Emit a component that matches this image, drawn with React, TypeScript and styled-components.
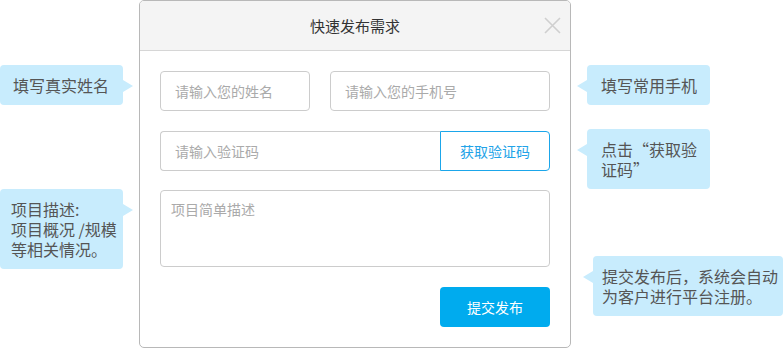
import React from "react";
import styled, { createGlobalStyle } from "styled-components";

const colors = {
    tipBg: "#c8ecfd",
    tipText: "#555555",
    border: "#cccccc",
    blue: "#00abee",
    placeholder: "#aaaaaa",
};

const GlobalStyle = createGlobalStyle`
    html, body {
        margin: 0;
        padding: 0;
        background: #ffffff;
        font-family: "Noto Sans CJK SC", "Noto Sans", sans-serif;
    }
`;

interface Tip {
    lines: string[];
    gap: number;
    indent?: number;
    width?: number;
    pad: number;
}

const leftTips: Tip[] = [
    { lines: ["填写真实姓名"], gap: 65, pad: 13 },
    { lines: ["项目描述:", "项目概况 /规模", "等相关情况。"], gap: 84, pad: 11 },
];

const rightTips: Tip[] = [
    { lines: ["填写常用手机"], gap: 65, indent: 16, pad: 14 },
    { lines: ["点击“获取验", "证码”"], gap: 24, indent: 16, pad: 14 },
    { lines: ["提交发布后，系统会自动", "为客户进行平台注册。"], gap: 67, indent: 22, width: 190, pad: 9 },
];

const App: React.FC = () => {
    return (
        <Page>
            <GlobalStyle />
            <SideColumn>
                {leftTips.map((tip, i) => (
                    <Callout key={"l" + i} $side="right" $gap={tip.gap} $indent={0} $width={123} $pad={tip.pad}>
                        {tip.lines.map((line, j) => (
                            <div key={j}>{line}</div>
                        ))}
                    </Callout>
                ))}
            </SideColumn>
            <Modal>
                <Header>
                    <Title>快速发布需求</Title>
                    <Close>
                        <svg width="17" height="17" viewBox="0 0 17 17">
                            <path d="M1 1 L16 16 M16 1 L1 16" stroke="#cfcfcf" strokeWidth="1.6" fill="none" />
                        </svg>
                    </Close>
                </Header>
                <Body>
                    <Row>
                        <Field placeholder="请输入您的姓名" $width={150} />
                        <Field placeholder="请输入您的手机号" $width={220} />
                    </Row>
                    <Row>
                        <CodeField placeholder="请输入验证码" />
                        <CodeButton>获取验证码</CodeButton>
                    </Row>
                    <Description placeholder="项目简单描述" />
                    <Footer>
                        <Submit>提交发布</Submit>
                    </Footer>
                </Body>
            </Modal>
            <SideColumn>
                {rightTips.map((tip, i) => (
                    <Callout
                        key={"r" + i}
                        $side="left"
                        $gap={tip.gap}
                        $indent={tip.indent || 0}
                        $width={tip.width || 123}
                        $pad={tip.pad}
                    >
                        {tip.lines.map((line, j) => (
                            <div key={j}>{line}</div>
                        ))}
                    </Callout>
                ))}
            </SideColumn>
        </Page>
    );
};

export default App;

const Page = styled.div`
    display: grid;
    grid-template-columns: 139px 432px 1fr;
    width: 783px;
    height: 348px;
    overflow: hidden;
`;

const SideColumn = styled.div`
    display: flex;
    flex-direction: column;
    align-items: flex-start;
`;

const Callout = styled.div<{ $side: "left" | "right"; $gap: number; $indent: number; $width: number; $pad: number }>`
    position: relative;
    box-sizing: border-box;
    width: ${(p) => p.$width}px;
    margin-top: ${(p) => p.$gap}px;
    margin-left: ${(p) => p.$indent}px;
    padding: 10px 6px 10px ${(p) => p.$pad}px;
    background: ${colors.tipBg};
    border-radius: 4px;
    color: ${colors.tipText};
    font-size: 16px;
    line-height: 20px;
    white-space: nowrap;

    &::after {
        content: "";
        position: absolute;
        top: 15px;
        ${(p) => (p.$side === "right" ? "right: -10px;" : "left: -10px;")}
        border-top: 6px solid transparent;
        border-bottom: 6px solid transparent;
        ${(p) =>
            p.$side === "right"
                ? `border-left: 10px solid ${colors.tipBg};`
                : `border-right: 10px solid ${colors.tipBg};`}
    }
`;

const Modal = styled.div`
    box-sizing: border-box;
    height: 348px;
    border: 1px solid #b8b8b8;
    border-radius: 5px;
    overflow: hidden;
    display: flex;
    flex-direction: column;
`;

const Header = styled.div`
    position: relative;
    height: 49px;
    flex-shrink: 0;
    background: #f4f4f4;
    border-bottom: 1px solid #d6d6d6;
    display: flex;
    align-items: center;
    justify-content: center;
`;

const Title = styled.div`
    font-size: 15px;
    color: #333333;
`;

const Close = styled.div`
    position: absolute;
    right: 9px;
    top: 16px;
    width: 17px;
    height: 17px;
    line-height: 0;
`;

const Body = styled.div`
    padding: 20px;
    display: flex;
    flex-direction: column;
    gap: 20px;
`;

const Row = styled.div`
    display: flex;
    justify-content: space-between;
`;

const inputBase = `
    box-sizing: border-box;
    height: 40px;
    border: 1px solid ${colors.border};
    outline: none;
    font-family: "Noto Sans CJK SC", sans-serif;
    font-size: 14px;
    color: #333;
    background: #fff;
    &::placeholder {
        color: ${colors.placeholder};
    }
`;

const Field = styled.input<{ $width: number }>`
    ${inputBase}
    width: ${(p) => p.$width}px;
    border-radius: 4px;
    padding: 0 14px;
`;

const CodeField = styled.input`
    ${inputBase}
    flex: 1;
    min-width: 0;
    border-right: none;
    border-radius: 4px 0 0 4px;
    padding: 0 14px;
`;

const CodeButton = styled.button`
    box-sizing: border-box;
    width: 110px;
    height: 40px;
    border: 1px solid #1ba6ea;
    border-radius: 0 4px 4px 0;
    background: #fff;
    color: #22a3e8;
    font-family: "Noto Sans CJK SC", sans-serif;
    font-size: 14px;
    padding: 0;
`;

const Description = styled.textarea`
    ${inputBase}
    height: 77px;
    margin-top: -1px;
    border-radius: 4px;
    padding: 8px 10px;
    resize: none;
    line-height: 20px;
`;

const Footer = styled.div`
    display: flex;
    justify-content: flex-end;
`;

const Submit = styled.button`
    width: 110px;
    height: 40px;
    border: none;
    border-radius: 4px;
    background: ${colors.blue};
    color: #ffffff;
    font-family: "Noto Sans CJK SC", sans-serif;
    font-size: 14px;
    padding: 0;
`;
